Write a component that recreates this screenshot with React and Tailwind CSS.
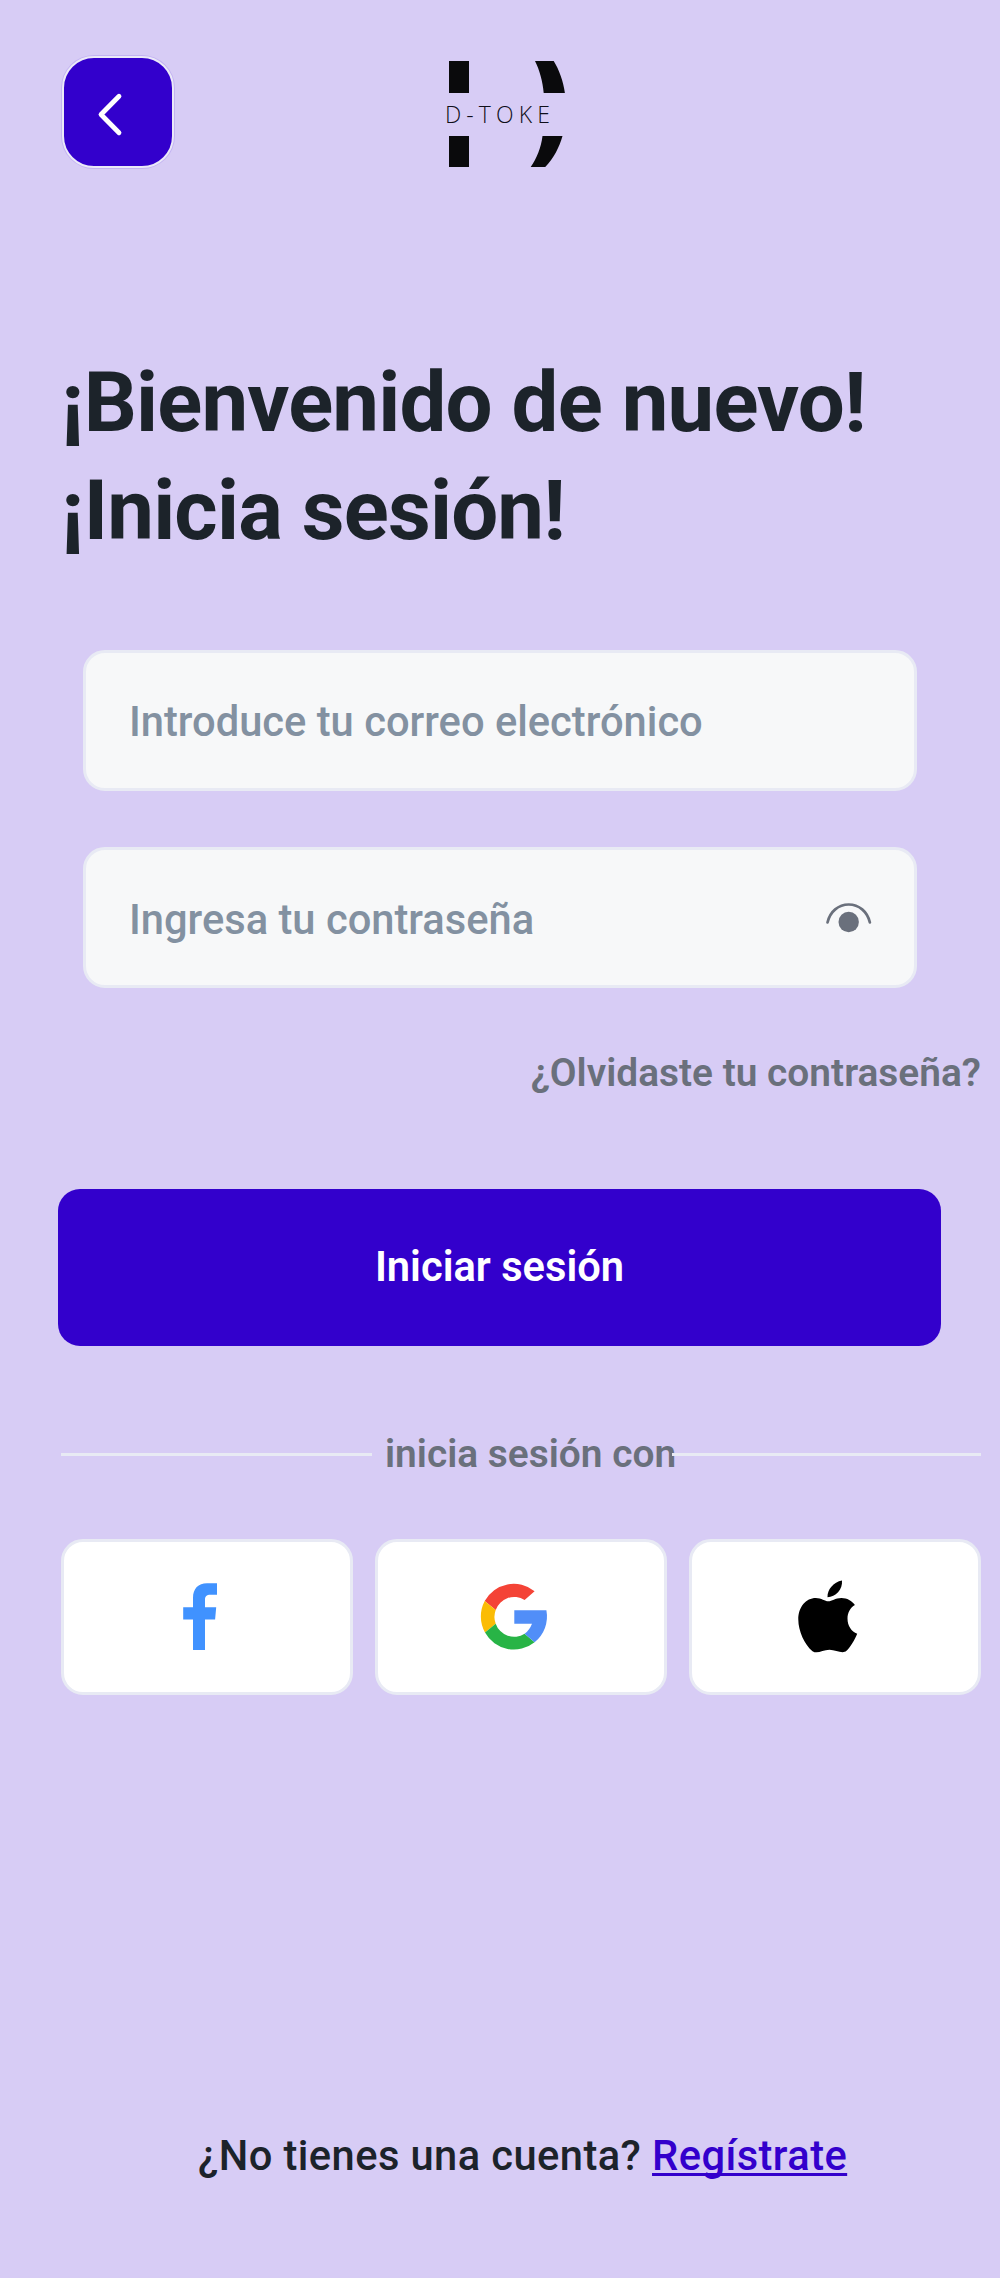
function BackButton() {
  return (
    <button
      type="button"
      aria-label="Volver"
      className="m-px flex size-[112px] items-center justify-center rounded-[32px] border-2 border-[#ebe9f8] bg-[#3300cc] ring-1 ring-[#c3b3f2]"
    >
      <svg width="112" height="112" viewBox="62 56 112 112" className="shrink-0" fill="none">
        <path d="M119 96.3 101 114.5 119 132.7" stroke="#fff" strokeWidth="4.8" strokeLinecap="round" strokeLinejoin="round" />
      </svg>
    </button>
  );
}

function Logo() {
  return (
    <div className="flex w-[122px] flex-col">
      <svg width="122" height="32" viewBox="445 61 122 32" fill="#0a0a0c">
        <path d="M449 61h20v32h-20zM535 61h18.7c5.500 9 9.600 20 11.200 32h-21.200c-1-12-4.200-23-8.700-32z" />
      </svg>
      <span className="h-[43px] whitespace-nowrap font-['Open_Sans'] text-[23px] font-[360] leading-[43px] tracking-[5.100px] text-[#0f0f1a]">
        D-TOKE
      </span>
      <svg width="122" height="31" viewBox="445 136 122 31" fill="#0a0a0c">
        <path d="M449 136h20v31h-20zM542.500 136h20c-3.200 11.500-9 22.500-17.300 31h-14.500c6-8.500 10.300-19 11.800-31z" />
      </svg>
    </div>
  );
}

function EyeIcon() {
  return (
    <svg width="48" height="36" viewBox="825 899 48 36" fill="none">
      <circle cx="848.7" cy="922" r="10.2" fill="#6a707c" />
      <path d="M827.500 922.500C830 911.500 838.500 904.500 848.700 904.500S867.400 911.500 869.900 922.500" stroke="#6a707c" strokeWidth="2.7" strokeLinecap="round" />
    </svg>
  );
}

function FacebookIcon() {
  return (
    <svg width="76" height="76" viewBox="162 1579 76 76" fill="#4092ff">
      <path d="M193 1650v-30.500h-9.800v-12.200h9.800v-9.300c0-9.500 5.300-14.700 14-14.700h10v11.500h-6.500c-4 0-5.500 2-5.500 4.800v7.700h11.200l-1.100 12.200h-10.100v30.500z" />
    </svg>
  );
}

function GoogleIcon() {
  return (
    <svg width="76" height="76" viewBox="476 1579 76 76">
      <path fill="#f44336" d="M484.700 1601A33 33 0 0 1 534.600 1591.300L524.600 1600A19.500 19.500 0 0 0 495.700 1610z" />
      <path fill="#fbbc05" d="M484.700 1601 495.700 1610A19.500 19.500 0 0 0 495.700 1623.700L485 1632.500A33 33 0 0 1 484.700 1601z" />
      <path fill="#28b446" d="M485 1632.500 495.700 1623.700A19.500 19.500 0 0 0 524.600 1633.800L534.600 1642.200A33 33 0 0 1 485 1632.500z" />
      <path fill="#518ef8" d="M514.300 1610.300H546.400A33 33 0 0 1 534.600 1642.200L524.600 1633.800Q529.600 1630 532 1623.700H514.300z" />
    </svg>
  );
}

function AppleIcon() {
  return (
    <svg width="76" height="76" viewBox="790 1579 76 76" fill="#000">
      <path d="M842 1580.500C842.800 1589.500 835.500 1597 827.500 1597.200 827 1590 833.500 1581.800 842 1580.500z" />
      <path d="M828.300 1601.300C832 1601.300 835 1598 841.500 1598 847 1598 852 1600.800 854.900 1605 850.500 1607.500 847.500 1612.500 847.500 1618.500 847.500 1626 851.500 1631.500 857.200 1633.700 854.500 1640.500 850 1647.500 846.500 1650.800 842.500 1654.500 836 1649.800 829.500 1649.800 822.500 1649.800 817.500 1654.500 812.500 1651.200 804.500 1644.500 798.300 1631 798.300 1619.500 798.300 1607 806 1598 815.800 1598 821.500 1598 825 1601.300 828.300 1601.300z" />
    </svg>
  );
}

const providers = [
  { name: "Facebook", Icon: FacebookIcon },
  { name: "Google", Icon: GoogleIcon },
  { name: "Apple", Icon: AppleIcon },
];

export default function App() {
  return (
    <main className="flex h-[2278px] w-[1000px] flex-col overflow-hidden bg-[#d7ccf5] font-[Roboto,sans-serif]">
      <header className="flex pl-[61px] pt-[55px]">
        <BackButton />
        <div className="ml-[270px] mt-[6px]">
          <Logo />
        </div>
      </header>

      <h1 className="ml-[61px] mt-[180px] whitespace-nowrap text-[83.333px] font-bold leading-[108.333px] tracking-[-0.833px] text-[#1c232a]">
        ¡Bienvenido de nuevo!
        <br />
        ¡Inicia sesión!
      </h1>

      <form className="mt-[84px] flex flex-col">
        <div className="mx-[83px] flex h-[141px] items-center rounded-[22px] border-[3px] border-[#e8eaf4] bg-[#f7f8f9] pl-[43px] pt-[5px] text-[41.667px] font-medium text-[#8391a1]">
          <span>Introduce tu correo electrónico</span>
        </div>
        <div className="mx-[83px] mt-[56px] flex h-[141px] items-center justify-between rounded-[22px] border-[3px] border-[#e8eaf4] bg-[#f7f8f9] pl-[43px] pr-[41px] text-[41.667px] font-medium text-[#8391a1]">
          <span className="pt-[6px]">Ingresa tu contraseña</span>
          <EyeIcon />
        </div>
        <a className="mr-[19px] mt-[61px] self-end whitespace-nowrap text-[38.889px] font-semibold leading-[47px] text-[#6a707c]">
          ¿Olvidaste tu contraseña?
        </a>
        <button
          type="button"
          className="ml-[58px] mt-[93px] flex h-[157px] w-[883px] items-center justify-center rounded-[22px] bg-[#3300cc] text-[41.667px] font-semibold text-white"
        >
          Iniciar sesión
        </button>
      </form>

      <div className="ml-[61px] mt-[84px] flex h-[47px] w-[920px] items-center">
        <div className="mt-[2px] h-[3px] w-[311px] bg-[#e8eaf4]" />
        <span className="ml-[13px] w-[287px] whitespace-nowrap text-[38.889px] font-semibold leading-[47px] text-[#6a707c]">
          inicia sesión con
        </span>
        <div className="relative mt-[2px] h-[3px] flex-1 bg-[#e8eaf4]" />
      </div>

      <div className="ml-[61px] mt-[62px] grid w-[920px] grid-cols-3 gap-[22px]">
        {providers.map(({ name, Icon }) => (
          <button
            key={name}
            type="button"
            aria-label={name}
            className="flex h-[156px] items-center justify-center rounded-[22px] border-[3px] border-[#e8eaf4] bg-white pr-[14px]"
          >
            <Icon />
          </button>
        ))}
      </div>

      <footer className="ml-[198px] mt-[432px] whitespace-nowrap text-[41.667px] font-medium leading-[58px] tracking-[0.417px] text-[#1c232a]">
        ¿No tienes una cuenta?{" "}
        <a className="text-[#3300cc] underline decoration-[2.500px] underline-offset-[3px] [text-decoration-skip-ink:none]">Regístrate</a>
      </footer>
    </main>
  );
}
